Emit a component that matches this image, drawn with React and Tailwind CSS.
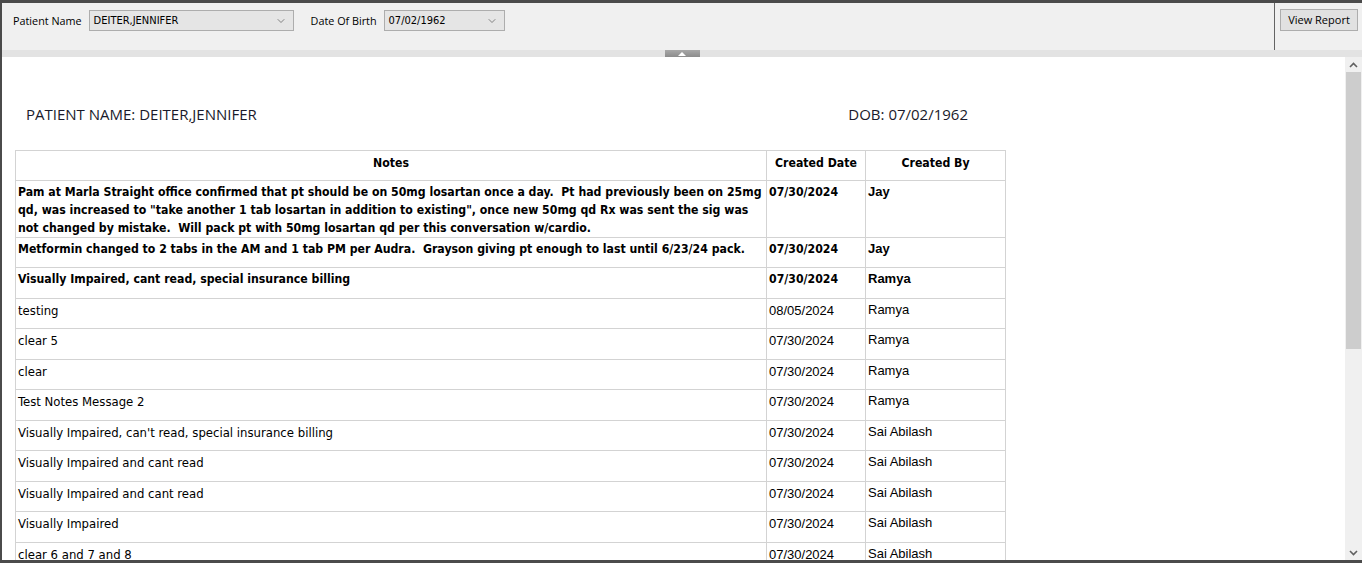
import { ChevronDown } from "lucide-react";

const notes = [
  {
    lines: [
      "Pam at Marla Straight office confirmed that pt should be on 50mg losartan once a day.  Pt had previously been on 25mg",
      'qd, was increased to "take another 1 tab losartan in addition to existing", once new 50mg qd Rx was sent the sig was',
      "not changed by mistake.  Will pack pt with 50mg losartan qd per this conversation w/cardio.",
    ],
    date: "07/30/2024",
    by: "Jay",
    bold: true,
  },
  {
    lines: ["Metformin changed to 2 tabs in the AM and 1 tab PM per Audra.  Grayson giving pt enough to last until 6/23/24 pack."],
    date: "07/30/2024",
    by: "Jay",
    bold: true,
  },
  { lines: ["Visually Impaired, cant read, special insurance billing"], date: "07/30/2024", by: "Ramya", bold: true },
  { lines: ["testing"], date: "08/05/2024", by: "Ramya" },
  { lines: ["clear 5"], date: "07/30/2024", by: "Ramya" },
  { lines: ["clear"], date: "07/30/2024", by: "Ramya" },
  { lines: ["Test Notes Message 2"], date: "07/30/2024", by: "Ramya" },
  { lines: ["Visually Impaired, can't read, special insurance billing"], date: "07/30/2024", by: "Sai Abilash" },
  { lines: ["Visually Impaired and cant read"], date: "07/30/2024", by: "Sai Abilash" },
  { lines: ["Visually Impaired and cant read"], date: "07/30/2024", by: "Sai Abilash" },
  { lines: ["Visually Impaired"], date: "07/30/2024", by: "Sai Abilash" },
  { lines: ["clear 6 and 7 and 8"], date: "07/30/2024", by: "Sai Abilash" },
];

const tahoma = "font-['DejaVu_Sans_Condensed','DejaVu_Sans',sans-serif]";
const arial = "font-['Liberation_Sans',Arial,sans-serif]";

function Combo({ value, width }) {
  return (
    <div
      className={`flex items-center justify-between h-[21px] border border-[#adadad] bg-[#e5e5e5] pl-[4px] pr-[6px] ${width}`}
    >
      <span className={`text-[11px] text-black pt-[1px] ${tahoma}`}>{value}</span>
      <ChevronDown size={12} strokeWidth={1.5} className="text-[#606060]" />
    </div>
  );
}

export default function App() {
  return (
    <div className="w-[1362px] h-[563px] bg-[#4b4b4b] pl-[2px] pt-[3px] pb-[3px] overflow-hidden">
      <div className="h-full flex flex-col bg-white">
        {/* toolbar */}
        <div className="h-[47px] flex bg-[#f0f0f0] font-['Open_Sans',sans-serif] text-[10.8px] text-black">
          <div className="flex-1 flex items-start pt-[7px] pl-[11px]">
            <div className="flex items-center gap-[7px]">
              <span className="pt-[1px]">Patient Name</span>
              <Combo value="DEITER,JENNIFER" width="w-[205px]" />
            </div>
            <div className="flex items-center gap-[7px] ml-[17px]">
              <span className="pt-[1px]">Date Of Birth</span>
              <Combo value="07/02/1962" width="w-[121px]" />
            </div>
          </div>
          <div className="w-[88px] border-l border-[#646464] pl-[5px] pt-[6px]">
            <button className="h-[22px] w-[78px] border border-[#adadad] bg-[#e1e1e1] text-[11px]">
              View Report
            </button>
          </div>
        </div>
        {/* splitter */}
        <div className="h-[7px] bg-[#e3e3e3] flex justify-center">
          <div className="w-[35px] h-[7px] bg-gradient-to-b from-[#a8a8a8] to-[#8c8c8c] flex items-center justify-center">
            <div className="w-0 h-0 border-l-[4px] border-r-[4px] border-b-[4px] border-l-transparent border-r-transparent border-b-white" />
          </div>
        </div>
        {/* content */}
        <div className="flex-1 flex min-h-0">
          <div className="flex-1 min-w-0 overflow-hidden pl-[13px] pt-[46px]">
            <div className="w-[990px] flex justify-between pl-[11px] pr-[37px] text-[15px] text-[#1a1a2a] font-['Open_Sans',sans-serif]">
              <span>PATIENT NAME: DEITER,JENNIFER</span>
              <span>DOB: 07/02/1962</span>
            </div>
            <table className={`mt-[24px] w-[991px] table-fixed border-collapse text-[13px] text-black ${tahoma}`}>
              <thead>
                <tr className="h-[30px] text-[12.2px]">
                  <th className="border border-[#d3d3d3] w-[751px] font-bold align-top pt-[3px]">Notes</th>
                  <th className="border border-[#d3d3d3] w-[99px] font-bold align-top pt-[3px]">Created Date</th>
                  <th className="border border-[#d3d3d3] font-bold align-top pt-[3px]">Created By</th>
                </tr>
              </thead>
              <tbody>
                {notes.map((n, i) => (
                  <tr key={i} className="h-[30.5px]">
                    <td
                      className={`border border-[#d3d3d3] align-top pl-[2px] leading-[18px] whitespace-pre overflow-hidden ${
                        n.bold ? "font-bold text-[12.2px] pt-[2px]" : "pt-[3px]"
                      }`}
                    >
                      {n.lines.map((l, j) => (
                        <div key={j}>{l}</div>
                      ))}
                    </td>
                    <td
                      className={`border border-[#d3d3d3] align-top pl-[2px] leading-[18px] ${
                        n.bold ? "font-bold text-[12.2px] pt-[2px]" : `${arial} pt-[3px]`
                      }`}
                    >
                      {n.date}
                    </td>
                    <td className={`border border-[#d3d3d3] align-top pl-[2px] pt-[2px] leading-[18px] ${arial} ${n.bold ? "font-bold" : ""}`}>
                      {n.by}
                    </td>
                  </tr>
                ))}
              </tbody>
            </table>
          </div>
          {/* scrollbar */}
          <div className="w-[17px] bg-[#f0f0f0] flex flex-col">
            <div className="h-[15px] flex items-center justify-center text-[#606060]">
              <svg width="9" height="6" viewBox="0 0 9 6"><path d="M1 5 L4.5 1.5 L8 5" stroke="currentColor" strokeWidth="1.6" fill="none" /></svg>
            </div>
            <div className="h-[277px] mx-[1px] bg-[#cdcdcd]" />
            <div className="flex-1" />
            <div className="h-[15px] flex items-center justify-center text-[#606060]">
              <svg width="9" height="6" viewBox="0 0 9 6"><path d="M1 1 L4.5 4.5 L8 1" stroke="currentColor" strokeWidth="1.6" fill="none" /></svg>
            </div>
          </div>
        </div>
      </div>
    </div>
  );
}
